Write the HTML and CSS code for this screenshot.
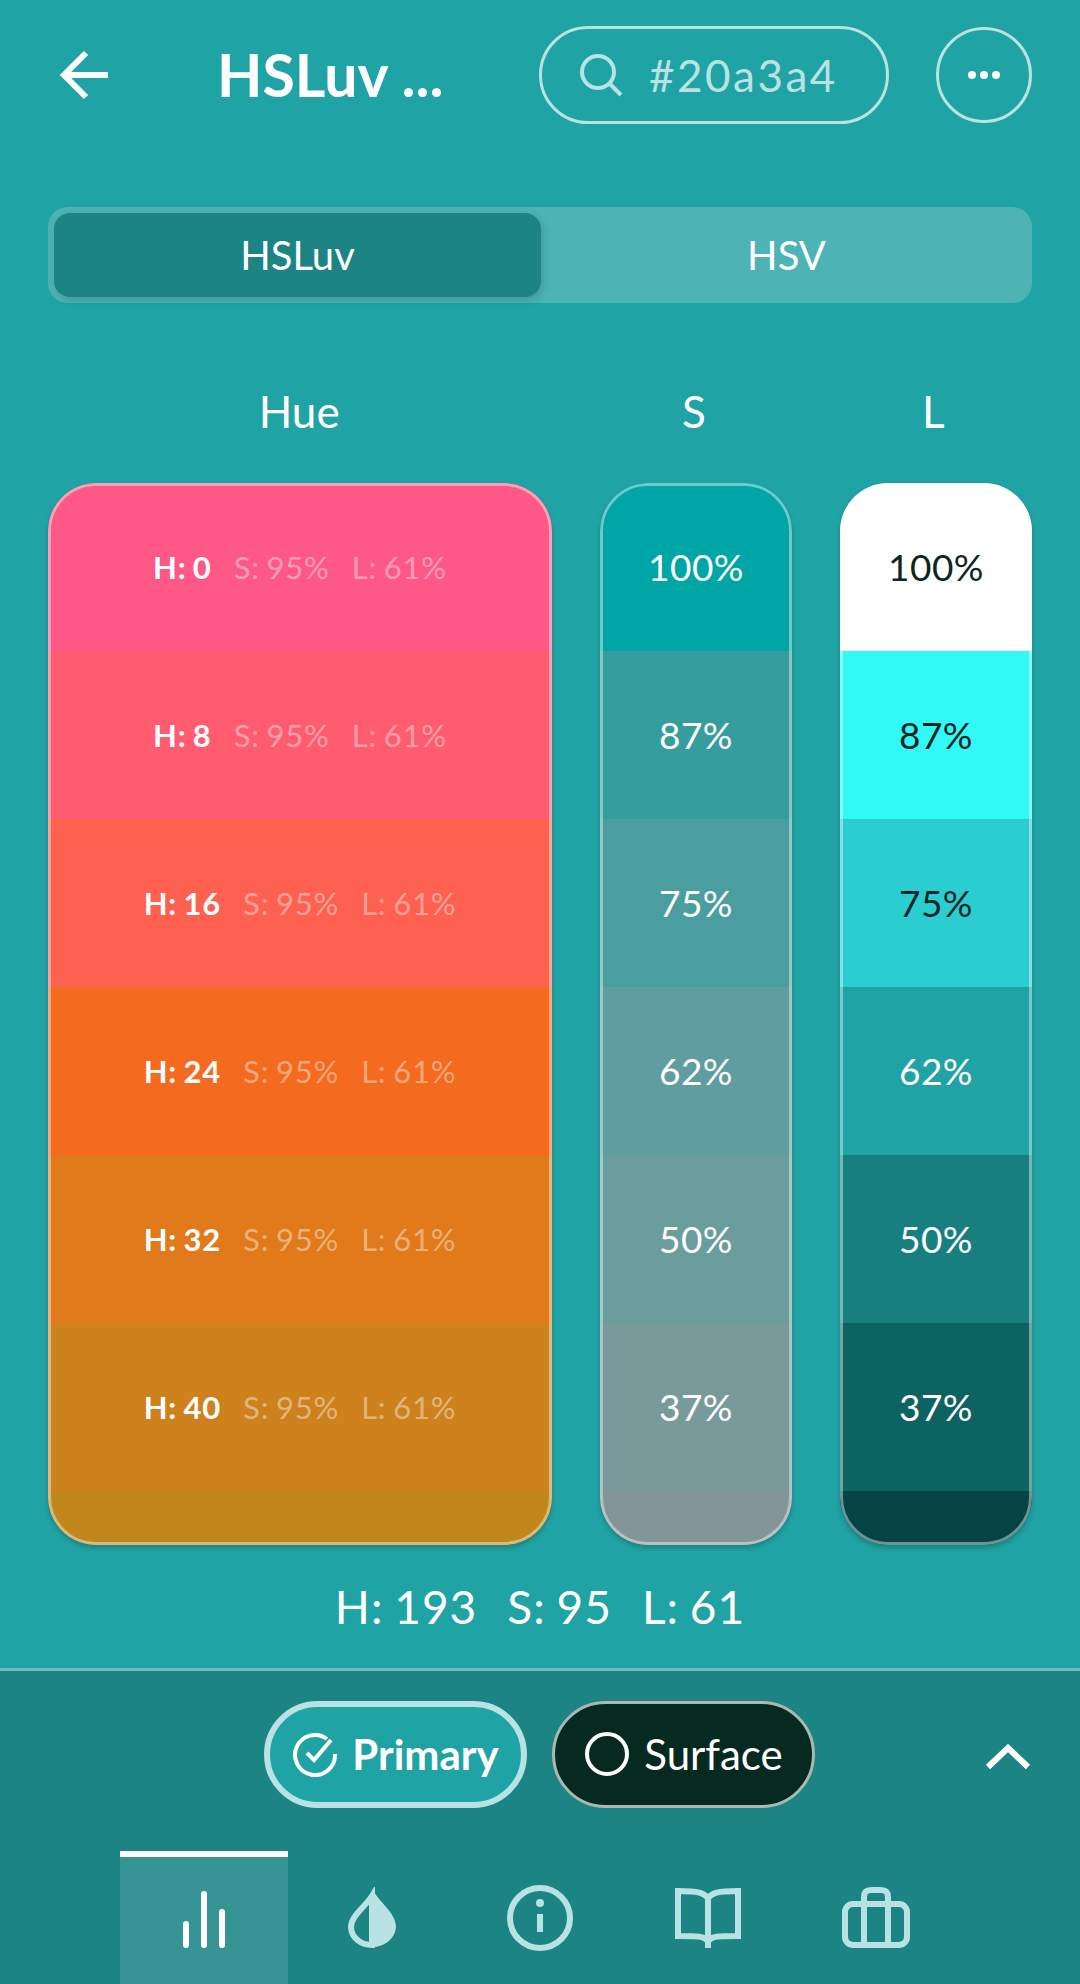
FILE: index.html
```html
<!DOCTYPE html>
<html lang="en">
<head>
  <meta charset="UTF-8">
  <title>HSLuv picker</title>
  <meta name="viewport" content="width=device-width, initial-scale=1.0">
  <link rel="stylesheet" href="styles.css">
</head>
<body>

  <!-- Top bar -->
  <header class="topbar">
    <svg class="back-icon" width="52" height="52" viewBox="0 0 52 52"><path d="M48 26H5M26 4 4 26l22 22"/></svg>
    <h1 class="title">HSLuv ...</h1>
    <div class="search">
      <svg class="search-icon" width="46" height="46" viewBox="0 0 46 46"><circle cx="20" cy="20" r="16"/><path d="M32 32l11 11"/></svg>
      <span class="search-text">#20a3a4</span>
    </div>
    <div class="more">
      <svg width="40" height="10" viewBox="0 0 40 10"><circle cx="8" cy="5" r="4"/><circle cx="20" cy="5" r="4"/><circle cx="32" cy="5" r="4"/></svg>
    </div>
  </header>

  <!-- Segmented control -->
  <div class="segment">
    <div class="segment-item active">HSLuv</div>
    <div class="segment-item">HSV</div>
  </div>

  <!-- Column labels -->
  <div class="columns labels">
    <div class="col-hue">Hue</div>
    <div class="col-narrow">S</div>
    <div class="col-narrow">L</div>
  </div>

  <!-- Swatches -->
  <div class="columns swatches">
    <div class="strip col-hue">
      <div class="row h0"><b>H: 0</b><span>S: 95%</span><span>L: 61%</span></div>
      <div class="row h1"><b>H: 8</b><span>S: 95%</span><span>L: 61%</span></div>
      <div class="row h2"><b>H: 16</b><span>S: 95%</span><span>L: 61%</span></div>
      <div class="row h3"><b>H: 24</b><span>S: 95%</span><span>L: 61%</span></div>
      <div class="row h4"><b>H: 32</b><span>S: 95%</span><span>L: 61%</span></div>
      <div class="row h5"><b>H: 40</b><span>S: 95%</span><span>L: 61%</span></div>
      <div class="row rest h6"></div>
    </div>
    <div class="strip col-narrow">
      <div class="row pct s0">100%</div>
      <div class="row pct s1">87%</div>
      <div class="row pct s2">75%</div>
      <div class="row pct s3">62%</div>
      <div class="row pct s4">50%</div>
      <div class="row pct s5">37%</div>
      <div class="row rest s6"></div>
    </div>
    <div class="strip col-narrow">
      <div class="row pct dark l0">100%</div>
      <div class="row pct dark l1">87%</div>
      <div class="row pct dark l2">75%</div>
      <div class="row pct l3">62%</div>
      <div class="row pct l4">50%</div>
      <div class="row pct l5">37%</div>
      <div class="row rest l6"></div>
    </div>
  </div>

  <div class="summary"><span>H: 193</span><span>S: 95</span><span>L: 61</span></div>

  <!-- Bottom panel -->
  <footer class="panel">
    <div class="chips">
      <div class="chip chip-primary">
        <svg width="46" height="46" viewBox="0 0 46 46"><path d="M35 8A20 20 0 1 0 43 23"/><path d="M15 22l7 7L39 9"/></svg>
        <span>Primary</span>
      </div>
      <div class="chip chip-surface">
        <svg width="46" height="46" viewBox="0 0 46 46"><circle cx="23" cy="23" r="20"/></svg>
        <span>Surface</span>
      </div>
      <svg class="chevron" width="46" height="26" viewBox="0 0 46 26"><path d="M3 23 23 4l20 19"/></svg>
    </div>
    <nav class="tabs">
      <div class="tab active">
        <svg width="48" height="60" viewBox="0 0 48 60"><path d="M6 54V33M24 54V3M42 54V21"/></svg>
      </div>
      <div class="tab">
        <svg width="52" height="62" viewBox="0 0 52 62"><path d="M26 9C19 20 5 29 5 40a21 18 0 0 0 21 18Z"/><path class="solid" d="M26 2C34 16 50 26 50 40A24 21 0 0 1 26 60Z"/></svg>
      </div>
      <div class="tab">
        <svg width="70" height="70" viewBox="0 0 70 70"><circle cx="35" cy="35" r="30"/><path d="M35 31V49"/><circle class="solid" cx="35" cy="20" r="4"/></svg>
      </div>
      <div class="tab">
        <svg width="70" height="64" viewBox="0 0 70 64"><path d="M35 12C31 7 26 5 5 5V50C26 50 31 50 35 55C39 50 44 50 65 50V5C44 5 39 7 35 12ZM35 12V62"/></svg>
      </div>
      <div class="tab">
        <svg width="70" height="64" viewBox="0 0 70 64"><rect x="4" y="18" width="62" height="41" rx="8"/><path d="M23 18V11Q23 4 30 4H40Q47 4 47 11V18M23 18V59M47 18V59"/></svg>
      </div>
    </nav>
  </footer>

</body>
</html>
```
FILE: styles.css
```css
* {
  box-sizing: border-box;
}

html, body {
  margin: 0;
  height: 100%;
}

body {
  width: 1080px;
  height: 1984px;
  overflow: hidden;
  display: flex;
  flex-direction: column;
  font-family: Lato, "Noto Sans", sans-serif;
  color: #ffffff;
  background-color: #20a3a4;
  font-variant-numeric: tabular-nums;
}

svg {
  fill: none;
  stroke: #b8e2e3;
  stroke-width: 4;
  display: block;
  flex: none;
}

svg .solid {
  fill: #b8e2e3;
  stroke: none;
}

/* Top bar */
.topbar {
  height: 207px;
  padding: 26px 48px 0 60px;
  display: flex;
  align-items: flex-start;
}

.back-icon {
  margin-top: 23px;
  stroke: #ffffff;
  stroke-width: 6;
}

.title {
  margin: 0 0 0 105px;
  width: 322px;
  height: 98px;
  line-height: 98px;
  font-size: 59px;
  font-weight: 700;
  white-space: nowrap;
}

.search {
  width: 350px;
  height: 98px;
  border: 3px solid #b8e2e3;
  border-radius: 49px;
  padding-left: 36px;
  display: flex;
  align-items: center;
  gap: 25px;
}

.search-text {
  font-size: 44px;
  letter-spacing: 2.5px;
  color: #b8e2e3;
}

.more {
  width: 96px;
  height: 96px;
  margin-top: 1px;
  margin-left: 47px;
  border: 3px solid #b8e2e3;
  border-radius: 50%;
  display: flex;
  align-items: center;
  justify-content: center;
}

.more svg {
  fill: #ffffff;
  stroke: none;
}

/* Segmented control */
.segment {
  margin: 0 48px;
  height: 96px;
  padding: 6px 0 6px 6px;
  display: flex;
  background-color: #4db3b5;
  border-radius: 20px;
}

.segment-item {
  flex: 1;
  display: flex;
  align-items: center;
  justify-content: center;
  font-size: 40px;
}

.segment-item.active {
  flex: none;
  width: 487px;
  background-color: #1d8484;
  border-radius: 16px;
  box-shadow: 2px 3px 8px rgba(0, 0, 0, 0.15);
}

/* Columns */
.columns {
  margin: 0 48px;
  display: flex;
  gap: 48px;
}

.col-hue {
  width: 504px;
}

.col-narrow {
  width: 192px;
}

.labels {
  height: 180px;
  padding-top: 81px;
  padding-right: 3px;
  font-size: 44px;
  line-height: 54px;
  text-align: center;
}

.strip {
  position: relative;
  height: 1062px;
  display: flex;
  flex-direction: column;
  border-radius: 48px;
  overflow: hidden;
  box-shadow: 0 3px 5px rgba(0, 0, 0, 0.2);
}

.strip::after {
  content: "";
  position: absolute;
  inset: 0;
  border: 3px solid rgba(255, 255, 255, 0.42);
  border-radius: 48px;
}

.row {
  height: 168px;
  flex: none;
  display: flex;
  align-items: center;
  justify-content: center;
  gap: 22px;
  font-size: 31px;
  letter-spacing: 0.8px;
  word-spacing: -2px;
}

.row b {
  font-weight: 700;
}

.row span {
  color: rgba(255, 255, 255, 0.42);
}

.row.rest {
  flex: 1;
}

.pct {
  padding-bottom: 2px;
  font-size: 37px;
  letter-spacing: 0.5px;
}

.dark {
  color: #0f2526;
}

.h0 { background-color: #fd5886; }
.h1 { background-color: #ff5c70; }
.h2 { background-color: #ff6150; }
.h3 { background-color: #f46a1f; }
.h4 { background-color: #e07a1a; }
.h5 { background-color: #cd821e; }
.h6 { background-color: #c0881c; }

.s0 { background-color: #00a5a6; }
.s1 { background-color: #359d9e; }
.s2 { background-color: #4b9ea0; }
.s3 { background-color: #5f9da0; }
.s4 { background-color: #6b9c9e; }
.s5 { background-color: #789a9b; }
.s6 { background-color: #839596; }

.l0 { background-color: #ffffff; }
.l1 { background-color: #33f9f6; }
.l2 { background-color: #2bced0; }
.l3 { background-color: #20a3a4; }
.l4 { background-color: #187f80; }
.l5 { background-color: #0d6361; }
.l6 { background-color: #064345; }

.summary {
  height: 123px;
  display: flex;
  align-items: center;
  justify-content: center;
  gap: 30px;
  font-size: 46px;
  letter-spacing: 1px;
  word-spacing: -2px;
}

/* Bottom panel */
.panel {
  flex: 1;
  display: flex;
  flex-direction: column;
  background-color: #1d8484;
  border-top: 3px solid #6dbcbc;
}

.chips {
  position: relative;
  height: 180px;
  padding: 30px 0 0 264px;
  display: flex;
  align-items: flex-start;
  gap: 25px;
}

.chip {
  width: 263px;
  height: 107px;
  padding-bottom: 2px;
  border-radius: 54px;
  display: flex;
  align-items: center;
  justify-content: center;
  gap: 14px;
  font-size: 42px;
}

.chip svg {
  stroke: #ffffff;
}

.chip-primary {
  background-color: #20a3a4;
  border: 6px solid #b8e2e3;
  font-weight: 700;
}

.chip-surface {
  background-color: #062a20;
  border: 3px solid #aab8b4;
}

.chevron {
  position: absolute;
  left: 985px;
  top: 73px;
  stroke: #ffffff;
  stroke-width: 6;
}

.tabs {
  flex: 1;
  padding-left: 120px;
  display: flex;
}

.tab {
  width: 168px;
  display: flex;
  align-items: center;
  justify-content: center;
}

.tab svg {
  stroke-width: 6;
}

.tab.active {
  background-color: #379494;
  border-top: 6px solid #ffffff;
}

.tab.active svg {
  stroke: #ffffff;
  stroke-linecap: round;
}
```
